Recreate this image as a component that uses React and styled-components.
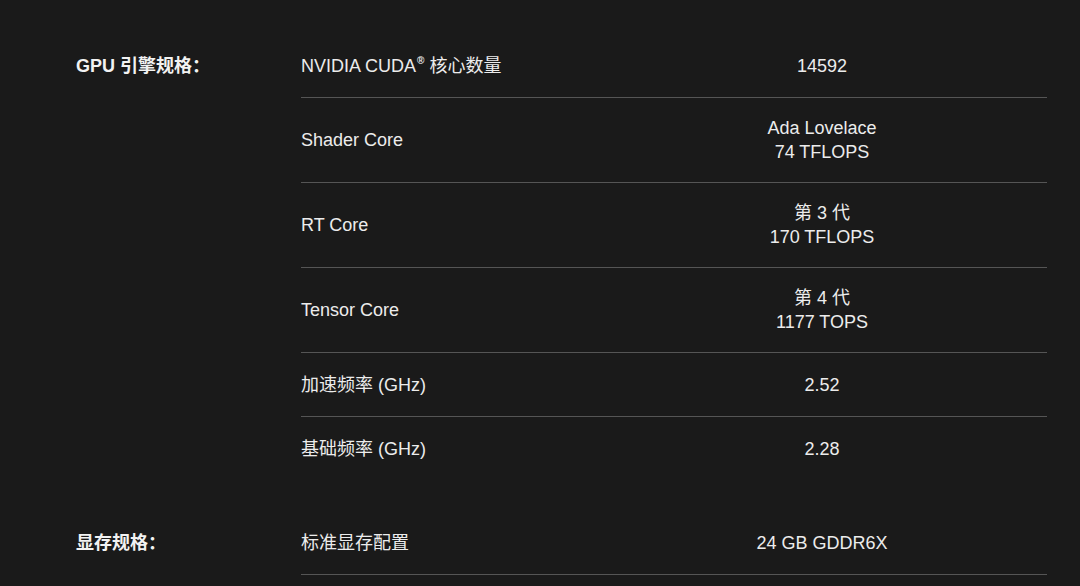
import React from 'react';
import styled, { createGlobalStyle } from 'styled-components';

const GlobalStyle = createGlobalStyle`
  html, body {
    margin: 0;
    padding: 0;
    background: #1a1a1a;
  }
  body {
    font-family: "Liberation Sans", "Noto Sans CJK SC", sans-serif;
    color: #eeeeee;
    -webkit-font-smoothing: antialiased;
  }
`;

const specs = [
  {
    title: 'GPU 引擎规格：',
    rows: [
      { name: <>NVIDIA CUDA<Sup>®</Sup> 核心数量</>, value: ['14592'] },
      { name: 'Shader Core', value: ['Ada Lovelace', '74 TFLOPS'] },
      { name: 'RT Core', value: ['第 3 代', '170 TFLOPS'] },
      { name: 'Tensor Core', value: ['第 4 代', '1177 TOPS'] },
      { name: '加速频率 (GHz)', value: ['2.52'] },
      { name: '基础频率 (GHz)', value: ['2.28'], last: true },
    ],
  },
  {
    title: '显存规格：',
    rows: [{ name: '标准显存配置', value: ['24 GB GDDR6X'] }],
  },
];

function Sup({ children }) {
  return <Mark>{children}</Mark>;
}

export default function App() {
  return (
    <>
      <GlobalStyle />
      <Page>
        {specs.map((section) => (
          <Section key={section.title}>
            <Heading>{section.title}</Heading>
            <Table>
              {section.rows.map((row, i) => (
                <Row key={i} $last={row.last}>
                  <Name>{row.name}</Name>
                  <Value>
                    {row.value.map((line) => (
                      <div key={line}>{line}</div>
                    ))}
                  </Value>
                </Row>
              ))}
            </Table>
          </Section>
        ))}
      </Page>
    </>
  );
}

const Page = styled.div`
  padding: 34px 33px 0 76px;
  display: flex;
  flex-direction: column;
  gap: 30px;
`;

const Section = styled.section`
  display: grid;
  grid-template-columns: 225px 1fr;
`;

const Heading = styled.h3`
  margin: 0;
  font-size: 18px;
  font-weight: 700;
  line-height: 24px;
  padding-top: 20px;
  color: #f2f2f2;
`;

const Table = styled.div`
  display: flex;
  flex-direction: column;
`;

const Row = styled.div`
  display: grid;
  grid-template-columns: 1fr 450px;
  align-items: center;
  min-height: 64px;
  padding: 18px 0;
  box-sizing: border-box;
  border-bottom: 1px solid ${(p) => (p.$last ? 'transparent' : '#555555')};
  font-size: 18px;
  line-height: 24px;
`;

const Name = styled.div`
  color: #ececec;
`;

const Value = styled.div`
  text-align: center;
  color: #ececec;
`;

const Mark = styled.sup`
  font-size: 10px;
  font-weight: 700;
  vertical-align: top;
  position: relative;
  top: -5px;
  margin-left: 1px;
`;
